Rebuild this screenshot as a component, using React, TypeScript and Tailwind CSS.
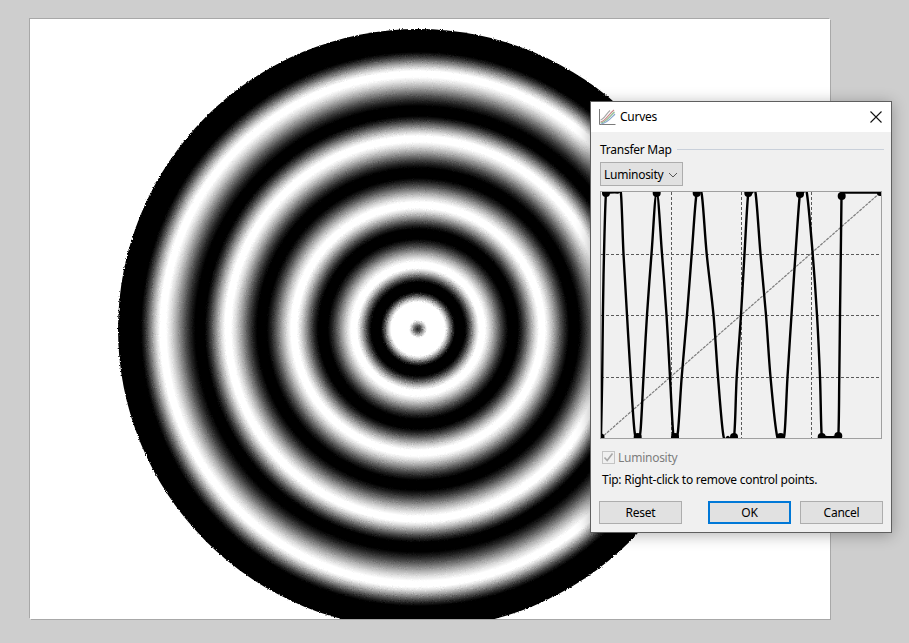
import React from 'react';

// ring centres read off the reference along the centre row: [radius, flat half-width, level]
const bands: [number, number, number][] = [
  [18, 9, 255], [42, 5, 0], [64, 3, 255], [95, 5, 0], [124, 3, 255], [156, 5, 0], [190, 3, 255], [218, 5, 0], [255, 3, 255],
];

function buildStops() {
  const stops: [number, string][] = [[0, '#1a1a1a'], [3, '#555555'], [6, '#b0b0b0']];
  const gray = (v: number) => `rgb(${v},${v},${v})`;
  bands.forEach(([r, w, level], i) => {
    stops.push([r - w, gray(level)], [r + w, gray(level)]);
    const next = bands[i + 1] ?? [282, 5, 0];
    const from = r + w;
    const to = next[0] - next[1];
    for (let k = 1; k < 6; k++) {
      const t = k / 6;
      // halfway between a straight ramp and a smoothstep
      const s = 0.6 * t + 0.4 * t * t * (3 - 2 * t);
      stops.push([from + (to - from) * t, gray(Math.round(level + (next[2] - level) * s))]);
    }
  });
  stops.push([277, '#000000'], [300, '#000000']);
  return stops;
}

const ringStops = buildStops();

// curve coordinates are local to the graph box (page x - 600, page y - 191)
const curve = [
  [1, 246], [2.2, 186], [2.9, 124], [4, 63], [6, 2], [9, 1.5], [18, 1.5], [21, 3], [23.5, 63], [27, 124], [30.7, 186], [34.5, 240], [37.7, 246],
  [40.5, 240], [43.5, 186], [47, 124], [51.5, 63], [56.7, 1.5], [62, 63], [66.5, 124], [70, 186], [73, 240], [75, 246],
  [78, 240], [81.7, 186], [87, 124], [91.7, 63], [96.7, 1.5], [101.7, 3], [106.7, 63], [113.5, 124], [118, 186], [123.3, 244], [128, 246], [134, 246],
  [136.7, 186], [141, 124], [144.5, 63], [148.3, 2], [152, 1.5], [155.7, 3], [160.5, 63], [166, 124], [170.5, 186], [176.7, 243], [180.7, 246],
  [184.5, 243], [187.5, 186], [191.5, 124], [195.5, 63], [200, 2], [203, 1.5], [207, 3], [212.7, 63], [217, 124], [220, 186], [221.7, 245],
  [225, 246], [235, 246], [238.3, 245], [239.3, 186], [240, 124], [240.8, 63], [241.5, 5],
];

const points = [
  [6, 2], [37.7, 246], [56.7, 2], [75, 246], [96.7, 2], [134, 246], [148.3, 2], [180.7, 246],
  [200, 3], [221.7, 246], [238.3, 245], [241.7, 5],
];

function smoothPath(pts: number[][]) {
  let d = `M${pts[0][0]} ${pts[0][1]}`;
  for (let i = 0; i < pts.length - 1; i++) {
    const p0 = pts[Math.max(i - 1, 0)];
    const p1 = pts[i];
    const p2 = pts[i + 1];
    const p3 = pts[Math.min(i + 2, pts.length - 1)];
    const c1 = [p1[0] + (p2[0] - p0[0]) / 6, p1[1] + (p2[1] - p0[1]) / 6];
    const c2 = [p2[0] - (p3[0] - p1[0]) / 6, p2[1] - (p3[1] - p1[1]) / 6];
    d += `C${c1[0]} ${c1[1]} ${c2[0]} ${c2[1]} ${p2[0]} ${p2[1]}`;
  }
  return d + 'V1.5H281';
}

function Rings() {
  return (
    <svg width="800" height="600" viewBox="0 0 800 600" className="block">
      <defs>
        <radialGradient id="rings" gradientUnits="userSpaceOnUse" cx="388" cy="310" r="300">
          {ringStops.map(([r, c]) => (
            <stop key={r} offset={r / 300} stopColor={c} />
          ))}
        </radialGradient>
        <filter id="grain" x="0" y="0" width="800" height="640" filterUnits="userSpaceOnUse" colorInterpolationFilters="sRGB">
          <feTurbulence type="fractalNoise" baseFrequency="0.85" numOctaves="1" seed="4" />
          <feDisplacementMap in="SourceGraphic" scale="3" xChannelSelector="R" yChannelSelector="G" />
        </filter>
      </defs>
      <circle cx="388" cy="310" r="300" fill="url(#rings)" filter="url(#grain)" />
    </svg>
  );
}

function CurvesIcon() {
  return (
    <svg width="17" height="17" viewBox="0 0 17 17" fill="none" className="shrink-0">
      <path d="M0.5 0V15.5H16.5" stroke="#7a7a7a" strokeWidth="1" />
      <path d="M1.5 13C6 12.5 9 6 15 1" stroke="#c98a8a" strokeWidth="1.2" />
      <path d="M1.5 14C7 13.5 10 8 15.5 3" stroke="#8fbb8f" strokeWidth="1.2" />
      <path d="M2 15C8 14.5 11 10 16 5" stroke="#8aa9cf" strokeWidth="1.2" />
      <path d="M1.5 11C5 10.5 7 5 11 1.5" stroke="#a8a8a8" strokeWidth="1.2" />
    </svg>
  );
}

function Graph() {
  const grid = 'M71.5 1V247M141.5 1V247M211.5 1V247M1 63.5H281M1 124.5H281M1 186.5H281';
  return (
    <div className="mt-[5px] mx-[9px] w-[282px] h-[248px] border border-[#a0a0a0] bg-[#f0f0f0] overflow-hidden">
      <svg width="280" height="246" viewBox="1 1 280 246" className="block">
        <path d={grid} stroke="#5a5a5a" strokeWidth="1" strokeDasharray="3 2" fill="none" />
        <path d="M1 247L281 1" stroke="#7c7c7c" strokeWidth="1.2" strokeDasharray="3 1" fill="none" />
        <path d={smoothPath(curve)} fill="none" stroke="#000" strokeWidth="2.4" strokeLinejoin="round" />
        {points.map(([x, y]) => (
          <circle key={x} cx={x} cy={y} r="4" fill="#000" />
        ))}
        <circle cx="1" cy="246" r="3.5" fill="#000" />
        <circle cx="280" cy="2" r="3" fill="#000" />
      </svg>
    </div>
  );
}

function CurvesDialog() {
  return (
    <div className="absolute left-[590px] top-[101px] w-[302px] h-[432px] border border-[#5f5f5f] bg-[#f0f0f0] shadow-[0_2px_14px_rgba(0,0,0,0.3)] text-[12px] leading-[16px] tracking-[-0.26px] text-black font-['Noto_Sans',sans-serif]">
      <div className="h-[30px] bg-white flex items-center pl-2 pr-[8px]">
        <CurvesIcon />
        <span className="ml-[4px]">Curves</span>
        <svg width="12" height="12" viewBox="0 0 12 12" className="ml-auto mr-px" fill="none">
          <path d="M0.5 0.5L11.5 11.5M11.5 0.5L0.5 11.5" stroke="#111" strokeWidth="1.1" />
        </svg>
      </div>

      <div className="flex items-center pl-[9px] pr-[7px] mt-[10px] -mb-px">
        <span>Transfer Map</span>
        <div className="flex-1 h-px bg-[#c9d0da] ml-[5px] -mt-[2px]" />
      </div>

      <div className="mx-[9px] mt-[5px] w-[83px] h-[24px] border border-[#adadad] bg-[#e1e1e1] flex items-center pl-[3px] pt-px">
        <span>Luminosity</span>
        <svg width="10" height="6" viewBox="0 0 10 6" fill="none" className="ml-auto mr-[4px]">
          <path d="M1 1L5 5L9 1" stroke="#555" strokeWidth="1" />
        </svg>
      </div>

      <Graph />

      <div className="flex items-center ml-[11px] mt-[12px] h-[13px] text-[#7d7d7d]">
        <span className="w-[13px] h-[13px] border border-[#c4c4c4] flex items-center justify-center">
          <svg width="11" height="11" viewBox="0 0 11 11" fill="none">
            <path d="M1.5 5.5L4.2 8.5L9.5 1.5" stroke="#a8a8a8" strokeWidth="1.6" />
          </svg>
        </span>
        <span className="ml-[3px]">Luminosity</span>
      </div>

      <div className="ml-[11px] mt-[8px]">Tip: Right-click to remove control points.</div>

      <div className="flex mt-[13px] ml-[8px]">
        <button className="w-[83px] h-[23px] border border-[#adadad] bg-[#e1e1e1]">Reset</button>
        <button className="ml-[26px] w-[83px] h-[23px] border-2 border-[#0078d7] bg-[#e1e1e1]">OK</button>
        <button className="ml-[9px] w-[83px] h-[23px] border border-[#adadad] bg-[#e1e1e1]">Cancel</button>
      </div>
    </div>
  );
}

export default function App() {
  return (
    <div className="relative w-[909px] h-[643px] overflow-hidden bg-[#cecece] pl-[30px] pt-[19px]">
      <div className="w-[800px] h-[600px] bg-white overflow-hidden shadow-[-1px_-1px_0_#a8a8a8,1px_1px_0_#a8a8a8]">
        <Rings />
      </div>
      <CurvesDialog />
    </div>
  );
}
